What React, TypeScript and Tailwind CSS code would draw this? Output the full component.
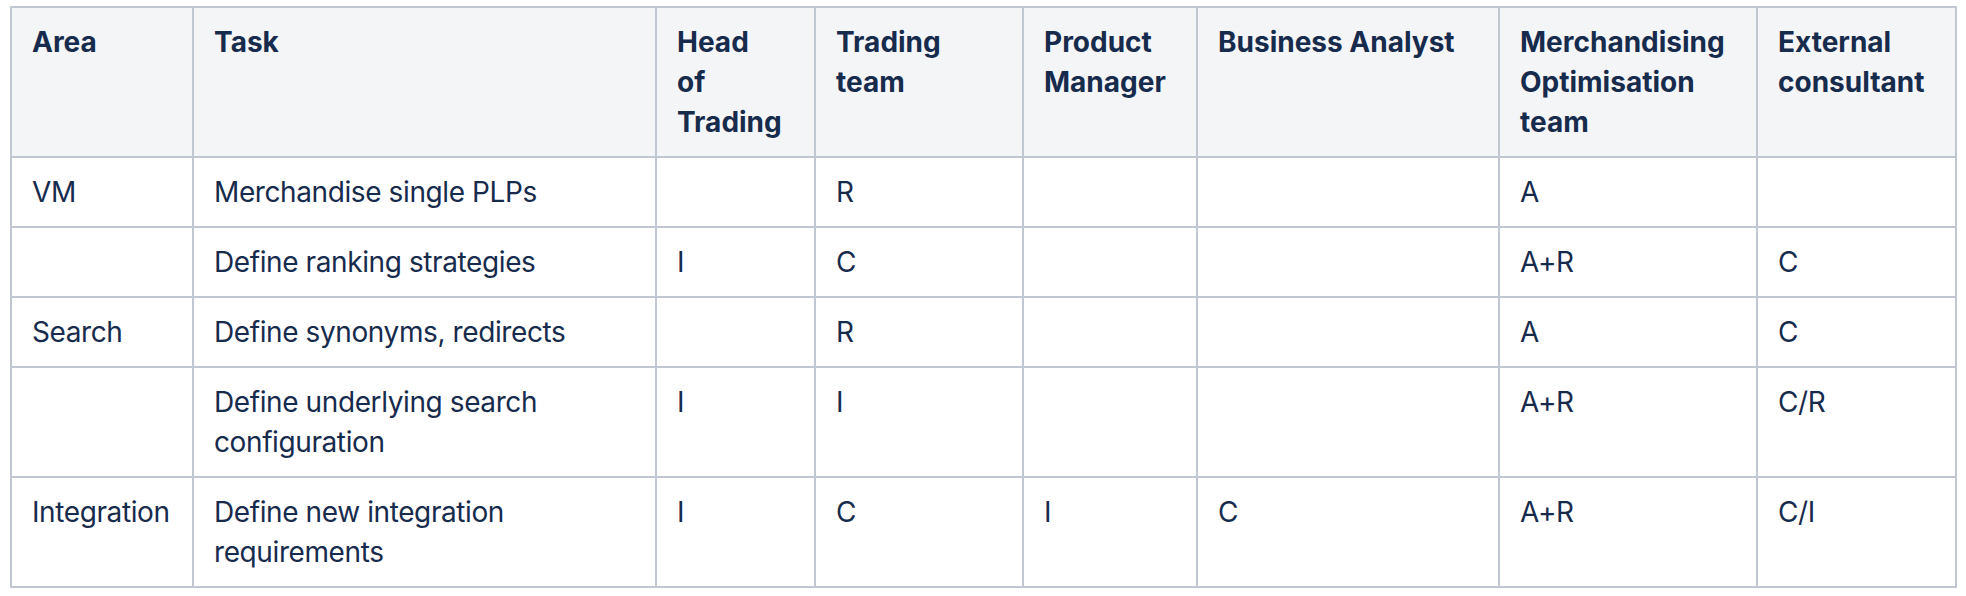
import React from "react";

type Row = {
  area: string;
  task: React.ReactNode;
  cells: string[];
  tall?: boolean;
};

const rows: Row[] = [
  { area: "VM", task: "Merchandise single PLPs", cells: ["", "R", "", "", "A", ""] },
  { area: "", task: "Define ranking strategies", cells: ["I", "C", "", "", "A+R", "C"] },
  { area: "Search", task: "Define synonyms, redirects", cells: ["", "R", "", "", "A", "C"] },
  {
    area: "",
    task: (
      <>
        Define underlying search
        <br />
        configuration
      </>
    ),
    cells: ["I", "I", "", "", "A+R", "C/R"],
    tall: true,
  },
  {
    area: "Integration",
    task: (
      <>
        Define new integration
        <br />
        requirements
      </>
    ),
    cells: ["I", "C", "I", "C", "A+R", "C/I"],
    tall: true,
  },
];

const th =
  "border-2 border-[#c1c7d0] bg-[#f4f5f7] px-[20px] py-[14px] text-left align-top font-bold";
const td =
  "border-2 border-[#c1c7d0] px-[20px] py-[14px] text-left align-top font-normal tracking-[-0.4px]";

export default function App() {
  return (
    <div className="min-h-screen bg-white pt-[6px] pl-[10px]">
      <table
        className="table-fixed border-collapse text-[28px] leading-[40px] text-[#172b4d]"
        style={{ width: 1947, fontFamily: "Inter, 'Noto Sans', sans-serif" }}
      >
        <colgroup>
          <col className="w-[182px]" />
          <col className="w-[463px]" />
          <col className="w-[159px]" />
          <col className="w-[208px]" />
          <col className="w-[174px]" />
          <col className="w-[302px]" />
          <col className="w-[258px]" />
          <col className="w-[199px]" />
        </colgroup>
        <thead>
          <tr className="h-[150px]">
            <th className={th}>Area</th>
            <th className={th}>Task</th>
            <th className={th}>
              Head
              <br />
              of
              <br />
              Trading
            </th>
            <th className={th}>
              Trading
              <br />
              team
            </th>
            <th className={th}>
              Product
              <br />
              Manager
            </th>
            <th className={th}>Business Analyst</th>
            <th className={th}>
              Merchandising
              <br />
              Optimisation
              <br />
              team
            </th>
            <th className={th}>
              External
              <br />
              consultant
            </th>
          </tr>
        </thead>
        <tbody>
          {rows.map((r, i) => (
            <tr key={i} className={r.tall ? "h-[110px]" : "h-[70px]"}>
              <td className={td}>{r.area}</td>
              <td className={td}>{r.task}</td>
              {r.cells.map((c, j) => (
                <td key={j} className={td}>
                  {c}
                </td>
              ))}
            </tr>
          ))}
        </tbody>
      </table>
    </div>
  );
}
